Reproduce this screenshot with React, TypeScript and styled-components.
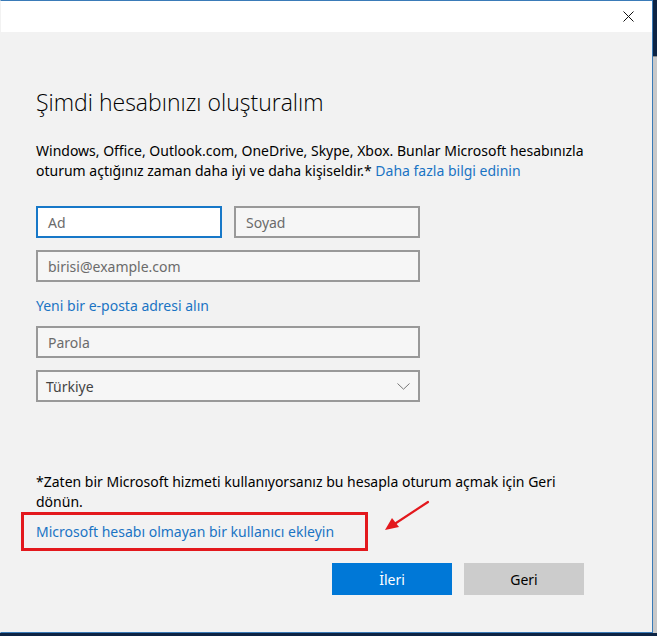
import React, { FC } from 'react';
import styled, { createGlobalStyle } from 'styled-components';

const GlobalStyle = createGlobalStyle`
    html, body {
        margin: 0;
        padding: 0;
        background: #0d2444;
    }
    body {
        font-family: "Noto Sans", "Open Sans", Arial, sans-serif;
    }
`;

const Desktop = styled.div`
    width: 657px;
    height: 636px;
    display: grid;
    grid-template-columns: 653px 4px;
    grid-template-rows: 633px 3px;
    overflow: hidden;
`;

const SideStrip = styled.div`
    display: flex;
    flex-direction: column;
`;
const SideTop = styled.div`
    height: 56px;
    background: #0d2444;
`;
const SideRest = styled.div`
    flex: 1;
    background: #c9c9c9;
    border-top: 1px solid #8c8c8c;
`;

const Dialog = styled.div`
    position: relative;
    box-sizing: border-box;
    border: 1px solid #3a7bb8;
    border-left-color: #f2f2f2;
    background: #f2f2f2;
    display: flex;
    flex-direction: column;
`;

const TitleBar = styled.div`
    height: 31px;
    background: #ffffff;
    display: flex;
    justify-content: flex-end;
    align-items: center;
    padding-right: 18px;
`;

const Body = styled.div`
    flex: 1;
    display: flex;
    flex-direction: column;
    padding: 0 35px;
    color: #000;
`;

const Heading = styled.h1`
    margin: 55px 0 0;
    font-family: "Open Sans", "Noto Sans", sans-serif;
    font-weight: 300;
    font-size: 23px;
    line-height: 30px;
    color: #000;
`;

const Text = styled.p<{ $top: number }>`
    margin: ${(p) => p.$top}px 0 0;
    font-size: 14px;
    line-height: 19.5px;
    color: #000;
`;

const Link = styled.a`
    color: #1a74c4;
    text-decoration: none;
    cursor: pointer;
`;

const Row = styled.div<{ $top: number }>`
    display: flex;
    gap: 12px;
    margin-top: ${(p) => p.$top}px;
    width: 384px;
`;

const Field = styled.div<{ $active?: boolean }>`
    flex: 1;
    box-sizing: border-box;
    height: 32px;
    border: 2px solid ${(p) => (p.$active ? '#1778c8' : '#999999')};
    background: ${(p) => (p.$active ? '#ffffff' : '#f6f6f6')};
    display: flex;
    align-items: center;
    justify-content: space-between;
    padding: 0 10px;
    font-size: 14px;
    color: #6b6b6b;
`;

const SelectField = styled(Field)`
    padding: 0 8px 0 8px;
    color: #444;
`;

const LinkLine = styled.div<{ $top: number }>`
    margin-top: ${(p) => p.$top}px;
    font-size: 14px;
    line-height: 20px;
`;

const Spacer = styled.div`
    flex: 1;
`;

const Highlight = styled.div`
    box-sizing: border-box;
    margin: 1px 0 0 -15px;
    width: 347px;
    height: 39px;
    border: 3px solid #e3181d;
    padding: 0 0 0 12px;
    display: flex;
    align-items: center;
    font-size: 14px;
`;

const Buttons = styled.div`
    display: flex;
    gap: 12px;
    margin: 12px 0 37px 296px;
`;

const Button = styled.button<{ $primary?: boolean }>`
    width: 120px;
    height: 32px;
    border: none;
    background: ${(p) => (p.$primary ? '#0078d7' : '#cccccc')};
    color: ${(p) => (p.$primary ? '#ffffff' : '#000000')};
    font-family: inherit;
    font-size: 14px;
    padding: 0;
`;

const Arrow = styled.svg`
    position: absolute;
    left: 380px;
    top: 492px;
`;

const BottomBar = styled.div`
    grid-column: 1 / 3;
    background: #0d2444;
`;

const CloseIcon: FC = () => (
    <svg width="11" height="11" viewBox="0 0 11 11">
        <path d="M0.5 0.5 L10.5 10.5 M10.5 0.5 L0.5 10.5" stroke="#111" strokeWidth="1" />
    </svg>
);

const Chevron: FC = () => (
    <svg width="13" height="7" viewBox="0 0 13 7">
        <path d="M0.5 0.5 L6.5 6.2 L12.5 0.5" stroke="#777" strokeWidth="1" fill="none" />
    </svg>
);

const App: FC = () => {
    return (
        <>
            <GlobalStyle />
            <Desktop>
                <Dialog>
                    <TitleBar>
                        <CloseIcon />
                    </TitleBar>
                    <Body>
                        <Heading>Şimdi hesabınızı oluşturalım</Heading>
                        <Text $top={24}>
                            Windows, Office, Outlook.com, OneDrive, Skype, Xbox. Bunlar Microsoft hesabınızla
                            <br />
                            oturum açtığınız zaman daha iyi ve daha kişiseldir.* <Link>Daha fazla bilgi edinin</Link>
                        </Text>
                        <Row $top={26}>
                            <Field $active>Ad</Field>
                            <Field>Soyad</Field>
                        </Row>
                        <Row $top={12}>
                            <Field>birisi@example.com</Field>
                        </Row>
                        <LinkLine $top={14}>
                            <Link>Yeni bir e-posta adresi alın</Link>
                        </LinkLine>
                        <Row $top={10}>
                            <Field>Parola</Field>
                        </Row>
                        <Row $top={12}>
                            <SelectField>
                                Türkiye
                                <Chevron />
                            </SelectField>
                        </Row>
                        <Spacer />
                        <Text $top={0}>
                            *Zaten bir Microsoft hizmeti kullanıyorsanız bu hesapla oturum açmak için Geri
                            <br />
                            dönün.
                        </Text>
                        <Highlight>
                            <Link>Microsoft hesabı olmayan bir kullanıcı ekleyin</Link>
                        </Highlight>
                        <Buttons>
                            <Button $primary>İleri</Button>
                            <Button>Geri</Button>
                        </Buttons>
                    </Body>
                    <Arrow width="52" height="40" viewBox="0 0 52 40">
                        <path d="M47 9 L12 32" stroke="#e3181d" strokeWidth="2.2" strokeLinecap="round" />
                        <path d="M4 37 L11 25 L18 34 Z" fill="#e3181d" />
                    </Arrow>
                </Dialog>
                <SideStrip>
                    <SideTop />
                    <SideRest />
                </SideStrip>
                <BottomBar />
            </Desktop>
        </>
    );
};

export default App;
